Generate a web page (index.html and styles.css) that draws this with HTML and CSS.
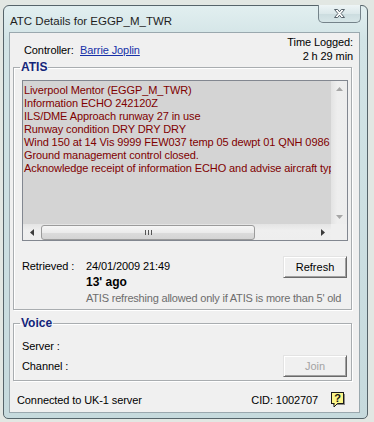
FILE: index.html
```html
<!DOCTYPE html>
<html lang="en">
<head>
    <meta charset="UTF-8">
    <meta name="viewport" content="width=device-width, initial-scale=1.0">
    <title>ATC Details for EGGP_M_TWR</title>
    <link rel="stylesheet" href="styles.css">
</head>
<body>
    <div class="window">
        <div class="titlebar">
            <span class="title">ATC Details for EGGP_M_TWR</span>
            <button class="close-btn" aria-label="Close">
                <svg width="13" height="11" viewBox="0 0 13 11">
                    <path d="M1.5 1.5h3.2l1.8 2.3 1.8-2.3h3.2l-3.4 4 3.4 4h-3.2l-1.8-2.3-1.8 2.3h-3.2l3.4-4z" fill="#fff" stroke="#56626a" stroke-width="1" stroke-linejoin="round"/>
                </svg>
            </button>
        </div>

        <div class="client">
            <div class="header-row">
                <div class="controller">
                    <span class="controller-label">Controller:</span>
                    <a href="#" class="link">Barrie Joplin</a>
                </div>
                <div class="time-logged">Time Logged:<br>2 h 29 min</div>
            </div>

            <!-- ATIS group -->
            <fieldset class="group atis-group">
                <legend>ATIS</legend>
                <div class="atis-box">
                    <div class="atis-text">
                        <div>Liverpool Mentor (EGGP_M_TWR)</div>
                        <div>Information ECHO 242120Z</div>
                        <div>ILS/DME Approach runway 27 in use</div>
                        <div>Runway condition DRY DRY DRY</div>
                        <div>Wind 150 at 14 Vis 9999 FEW037 temp 05 dewpt 01 QNH 0986</div>
                        <div>Ground management control closed.</div>
                        <div>Acknowledge receipt of information ECHO and advise aircraft typ</div>
                    </div>
                    <div class="vscroll">
                        <svg width="7" height="4" viewBox="0 0 7 4"><polygon points="3.5,0 7,4 0,4" fill="#a6a6a6"/></svg>
                        <svg width="7" height="4" viewBox="0 0 7 4"><polygon points="0,0 7,0 3.5,4" fill="#a6a6a6"/></svg>
                    </div>
                    <div class="hscroll">
                        <div class="arrow-btn">
                            <svg width="4" height="7" viewBox="0 0 4 7"><polygon points="4,0 4,7 0,3.5" fill="#3c3c3c"/></svg>
                        </div>
                        <div class="track">
                            <div class="thumb"><span class="grip"></span></div>
                        </div>
                        <div class="arrow-btn">
                            <svg width="4" height="7" viewBox="0 0 4 7"><polygon points="0,0 4,3.5 0,7" fill="#3c3c3c"/></svg>
                        </div>
                    </div>
                    <div class="corner"></div>
                </div>

                <div class="retrieved">
                    <span class="retrieved-label">Retrieved :</span>
                    <div class="retrieved-info">
                        <div>24/01/2009 21:49</div>
                        <div class="age">13' ago</div>
                        <div class="note">ATIS refreshing allowed only if ATIS is more than 5' old</div>
                    </div>
                    <button class="btn refresh-btn">Refresh</button>
                </div>
            </fieldset>

            <!-- Voice group -->
            <fieldset class="group voice-group">
                <legend>Voice</legend>
                <div class="voice-row">Server :</div>
                <div class="voice-row channel-row">
                    <span>Channel :</span>
                    <button class="btn join-btn" disabled>Join</button>
                </div>
            </fieldset>

            <div class="status">
                <span class="status-text">Connected to UK-1 server</span>
                <span class="cid">CID: 1002707</span>
                <span class="help-icon">
                    <svg width="15" height="16" viewBox="0 0 15 16">
                        <rect x="2" y="2" width="12" height="11" fill="#8a8a8a"/>
                        <rect x="0.5" y="0.5" width="12" height="11" fill="#fbf58a" stroke="#1a1a1a"/>
                        <polygon points="3,11.5 3,15 6.5,11.5" fill="#fbf58a" stroke="#1a1a1a" stroke-linejoin="round"/>
                        <rect x="3.6" y="11" width="2.5" height="1" fill="#fbf58a"/>
                        <text x="6.6" y="10" font-family="Liberation Sans, Arial, sans-serif" font-size="11" font-weight="bold" text-anchor="middle" fill="#111">?</text>
                    </svg>
                </span>
            </div>
        </div>
    </div>
</body>
</html>
```

FILE: styles.css
```css
body {
    margin: 0;
    padding: 0;
    font-family: "Liberation Sans", Arial, sans-serif;
    font-size: 11px;
    letter-spacing: -0.1px;
    color: #000;
    background-color: #e2e7e3;
}

/* Window frame */
.window {
    margin: 5px 0 0 3px;
    width: 365px;
    height: 414px;
    box-sizing: border-box;
    border: 1px solid #56646a;
    border-radius: 6px 6px 5px 5px;
    background: linear-gradient(to bottom, #e2eff0 0%, #d2e4e6 8%, #c6dadd 100%);
    padding: 0 7px 5px 5px;
    display: flex;
    flex-direction: column;
}

.titlebar {
    height: 26px;
    display: flex;
    justify-content: space-between;
    align-items: flex-start;
    flex-shrink: 0;
}

.title {
    font-size: 11.5px;
    letter-spacing: 0;
    line-height: 14px;
    color: #1e1e1e;
    padding: 8px 0 0 1px;
}

.close-btn {
    margin: -1px -1px 0 0;
    width: 43px;
    height: 18px;
    padding: 0;
    border: 1px solid #75838a;
    border-top: none;
    border-radius: 0 0 5px 5px;
    background: linear-gradient(to bottom, #eef5f6 0%, #dbe8ea 50%, #cbdcdf 51%, #d7e6e8 100%);
    display: flex;
    align-items: center;
    justify-content: center;
}

/* Client area */
.client {
    flex: 1;
    box-sizing: border-box;
    background-color: #f0f0f0;
    border: 1px solid #9aa8ae;
    padding: 0 7px 0 3px;
    display: flex;
    flex-direction: column;
}

.header-row {
    height: 27px;
    display: flex;
    justify-content: space-between;
    align-items: flex-start;
    line-height: 14px;
}

.controller {
    padding: 10px 0 0 11px;
    display: flex;
}

.controller-label {
    width: 56px;
}

.link {
    color: #1630a8;
    text-decoration: underline;
}

.time-logged {
    padding-top: 2px;
    margin-right: -1px;
    text-align: right;
    position: relative;
    z-index: 1;
}

/* Group boxes */
.group {
    margin: 0;
    padding: 6px 3px 3px 8px;
    border: 1px solid #a9adb0;
    box-shadow: inset 1px 1px 0 #fff, 1px 1px 0 #fff;
    min-width: 0;
}

.group legend {
    font-size: 12px;
    font-weight: bold;
    letter-spacing: 0;
    line-height: 14px;
    color: #13247a;
    padding: 0 1px;
    margin-left: -2px;
}

/* ATIS text box */
.atis-box {
    display: grid;
    grid-template-columns: 1fr 16px;
    grid-template-rows: 143px 16px;
    border: 1px solid #828790;
    background-color: #d4d4d4;
}

.atis-text {
    padding: 3px 0 0 1px;
    line-height: 13px;
    color: #800000;
    white-space: nowrap;
    overflow: hidden;
}

.vscroll {
    background: linear-gradient(to right, #e3e3e3, #eeeeee 40%, #ededed);
    display: flex;
    flex-direction: column;
    justify-content: space-between;
    align-items: center;
    padding: 6px 0 5px;
}

.hscroll {
    display: flex;
    background: linear-gradient(to bottom, #e4e4e4, #efefef 40%, #eeeeee);
}

.arrow-btn {
    width: 17px;
    display: flex;
    align-items: center;
    justify-content: center;
}

.track {
    flex: 1;
    display: flex;
    align-items: center;
}

.thumb {
    width: 212px;
    height: 13px;
    margin-left: 1px;
    border: 1px solid #9b9b9b;
    border-radius: 3px;
    background: linear-gradient(to bottom, #f6f6f6 0%, #ebebeb 50%, #dcdcdc 51%, #d4d4d4 100%);
    display: flex;
    align-items: center;
    justify-content: center;
}

.grip {
    width: 7px;
    height: 5px;
    background: repeating-linear-gradient(to right, #555 0 1px, transparent 1px 3px);
}

.corner {
    background-color: #efefef;
}

/* Retrieved section */
.retrieved {
    display: flex;
    align-items: flex-start;
    margin-top: 17px;
    line-height: 16px;
}

.retrieved-label {
    width: 64px;
    flex-shrink: 0;
}

.retrieved-info {
    flex: 1;
    min-width: 0;
    white-space: nowrap;
}

.age {
    font-size: 12px;
    font-weight: bold;
    letter-spacing: 0;
}

.note {
    color: #6d6d6d;
    letter-spacing: -0.2px;
}

.btn {
    width: 64px;
    height: 22px;
    padding: 0;
    font-family: inherit;
    font-size: 11px;
    background-color: #f0f0f0;
    border: 1px solid;
    border-color: #e3e3e3 #696969 #696969 #e3e3e3;
    box-shadow: inset 1px 1px 0 #fff, inset -1px -1px 0 #a0a0a0;
    color: #000;
}

.refresh-btn {
    margin: -2px 1px 0 0;
    flex-shrink: 0;
}

.join-btn {
    color: #a3a3a3;
    margin-right: 1px;
}

/* Voice section */
.voice-group {
    margin-top: 6px;
    padding-top: 9px;
}

.voice-row {
    line-height: 14px;
}

.channel-row {
    margin-top: 2px;
    display: flex;
    justify-content: space-between;
    align-items: center;
}

/* Status bar */
.status {
    display: flex;
    align-items: center;
    margin-top: 11px;
    padding: 0 6px 0 4px;
}

.status-text {
    flex: 1;
}

.cid {
    margin-right: 13px;
}

.help-icon {
    display: flex;
    height: 16px;
}
```
